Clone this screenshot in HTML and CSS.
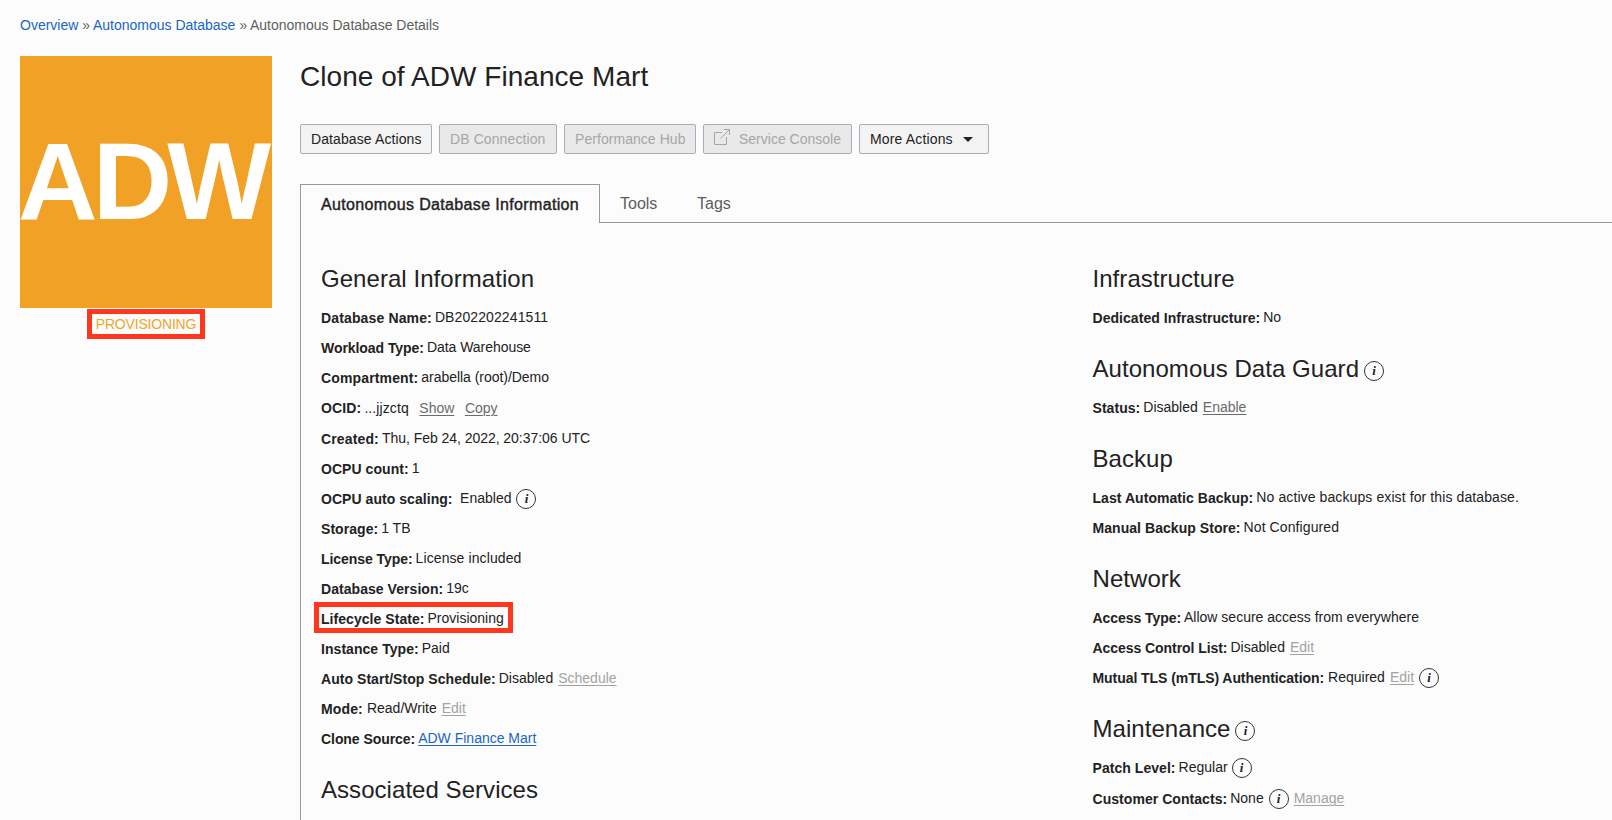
FILE: index.html
```html
<!DOCTYPE html>
<html lang="en">
<head>
<meta charset="utf-8">
<title>Autonomous Database Details</title>
<link rel="stylesheet" href="styles.css">
</head>
<body>
<nav class="breadcrumb">
  <a class="crumb">Overview</a><span class="sep">»</span><a class="crumb">Autonomous Database</a><span class="sep">»</span><span>Autonomous Database Details</span>
</nav>
<div class="page">
  <aside class="side">
    <div class="logo">ADW</div>
    <div class="status">PROVISIONING</div>
  </aside>
  <main class="main">
    <h1 class="title">Clone of ADW Finance Mart</h1>
    <div class="actions">
      <button class="btn b1">Database Actions</button>
      <button class="btn b2 off">DB Connection</button>
      <button class="btn b3 off">Performance Hub</button>
      <button class="btn b4 off"><svg class="ext" width="16" height="16" viewBox="0 0 16 16" fill="none" stroke="currentColor"><path d="M8 3.5H.5v12h12V8M6.5 9.5 15 1M10 .5h5.5V6"/></svg>Service Console</button>
      <button class="btn b5">More Actions<span class="caret"></span></button>
    </div>
    <div class="tabs">
      <div class="tab active">Autonomous Database Information</div>
      <div class="tab tools">Tools</div>
      <div class="tab tags">Tags</div>
    </div>
    <div class="panel">
      <div class="col left">
        <h2 class="head">General Information</h2>
        <div class="row"><b class="s2">Database Name:</b><span class="val wide">DB202202241511</span></div>
        <div class="row"><b class="s0">Workload Type:</b><span class="val tight">Data Warehouse</span></div>
        <div class="row"><b class="s2">Compartment:</b><span class="val tight">arabella (root)/Demo</span></div>
        <div class="row ocid"><b class="s2">OCID:</b><span class="val wide">...jjzctq</span><a class="link">Show</a><a class="link">Copy</a></div>
        <div class="row"><b class="s2">Created:</b><span class="val tight">Thu, Feb 24, 2022, 20:37:06 UTC</span></div>
        <div class="row"><b>OCPU count:</b><span class="val">1</span></div>
        <div class="row scaling"><b>OCPU auto scaling:</b><span class="val">Enabled</span><span class="info">i</span></div>
        <div class="row"><b>Storage:</b><span class="val">1 TB</span></div>
        <div class="row"><b class="s0">License Type:</b><span class="val wide">License included</span></div>
        <div class="row"><b>Database Version:</b><span class="val">19c</span></div>
        <div class="row marked"><b>Lifecycle State:</b><span class="val">Provisioning</span></div>
        <div class="row"><b>Instance Type:</b><span class="val">Paid</span></div>
        <div class="row"><b>Auto Start/Stop Schedule:</b><span class="val">Disabled</span><a class="link dim">Schedule</a></div>
        <div class="row mode"><b class="s2">Mode:</b><span class="val">Read/Write</span><a class="link dim">Edit</a></div>
        <div class="row"><b class="s0">Clone Source:</b><a class="val link blue">ADW Finance Mart</a></div>
        <h2 class="head">Associated Services</h2>
      </div>
      <div class="col">
        <h2 class="head">Infrastructure</h2>
        <div class="row"><b>Dedicated Infrastructure:</b><span class="val">No</span></div>
        <h2 class="head">Autonomous Data Guard<span class="info">i</span></h2>
        <div class="row"><b>Status:</b><span class="val">Disabled</span><a class="link">Enable</a></div>
        <h2 class="head">Backup</h2>
        <div class="row"><b>Last Automatic Backup:</b><span class="val wide">No active backups exist for this database.</span></div>
        <div class="row"><b>Manual Backup Store:</b><span class="val wide">Not Configured</span></div>
        <h2 class="head">Network</h2>
        <div class="row"><b class="s0">Access Type:</b><span class="val">Allow secure access from everywhere</span></div>
        <div class="row"><b class="s0">Access Control List:</b><span class="val">Disabled</span><a class="link dim">Edit</a></div>
        <div class="row mtls"><b class="s0">Mutual TLS (mTLS) Authentication:</b><span class="val">Required</span><a class="link dim">Edit</a><span class="info">i</span></div>
        <h2 class="head">Maintenance<span class="info">i</span></h2>
        <div class="row patch"><b>Patch Level:</b><span class="val">Regular</span><span class="info">i</span></div>
        <div class="row contacts"><b>Customer Contacts:</b><span class="val">None</span><span class="info">i</span><a class="link dim">Manage</a></div>
      </div>
    </div>
  </main>
</div>
</body>
</html>
```
FILE: styles.css
```css
* { box-sizing: border-box; }
body {
  margin: 0;
  height: 820px;
  overflow: hidden;
  background: #fcfcfc;
  color: #222;
  font: 14px/30px "Liberation Sans", Arial, sans-serif;
}
.breadcrumb { display: flex; height: 56px; padding: 10px 0 0 20px; color: #5f5f5f; }
.crumb { color: #1a66c2; }
.sep { margin: 0 2.8px 0 4px; }
.wide { letter-spacing: .1px; }
.tight { letter-spacing: -.04px; }

.page { display: flex; }
.side { width: 300px; flex: none; padding-left: 20px; }
.logo {
  width: 252px;
  height: 252px;
  background: #f1a125;
  color: #fff;
  font-size: 110px;
  font-weight: 700;
  line-height: 249px;
  letter-spacing: -4.8px;
  text-indent: -2px;
  white-space: nowrap;
}
.status {
  width: 118px;
  height: 30px;
  margin: 1px 0 0 67px;
  border: 5px solid #ff371c;
  color: #efa52b;
  line-height: 21px;
  text-align: center;
  letter-spacing: -.18px;
}
.main { flex: 1; min-width: 0; }
.title {
  margin: 0;
  height: 68px;
  font-size: 28px;
  font-weight: 400;
  line-height: 42px;
  letter-spacing: .05px;
}

.actions { display: flex; gap: 7px; }
.btn {
  display: flex;
  align-items: center;
  height: 30px;
  padding: 0 0 0 10px;
  border: 1px solid #a7adb9;
  border-radius: 2px;
  background: #f3f3f3;
  color: #222;
  font: 14px/28px "Liberation Sans", Arial, sans-serif;
  white-space: nowrap;
}
.off { background: #e9e9e9; color: #a6a6a6; }
.b1 { width: 132px; letter-spacing: .1px; }
.b2 { width: 118px; letter-spacing: .1px; }
.b3 { width: 132px; letter-spacing: .05px; }
.b4 { width: 149px; }
.b5 { width: 130px; letter-spacing: .15px; }
.ext { margin: -4px 9px 0 0; }
.caret { margin-left: 10px; border: 5px solid transparent; border-top-color: #222; border-bottom: 0; }

.tabs { display: flex; height: 39px; margin-top: 30px; font-size: 16px; line-height: 40px; }
.tab { border-bottom: 1px solid #999; color: #5c5c5c; }
.active {
  width: 300px;
  padding-left: 20px;
  border: 1px solid #999;
  border-bottom: 0;
  color: #222;
  line-height: 39px;
  letter-spacing: .35px;
  -webkit-text-stroke: .4px #222;
}
.tools { padding-left: 20px; width: 77px; }
.tags { flex: 1; padding-left: 20px; }

.panel { display: flex; height: 597px; padding: 20px 0 0 20px; border-left: 1px solid #999; }
.col { flex: 1; }
.left { flex: none; width: 771.5px; }
.head {
  display: flex;
  height: 60px;
  margin: 0;
  padding-top: 13px;
  font-size: 24px;
  font-weight: 400;
  line-height: 46px;
  letter-spacing: .05px;
}
.row { position: relative; display: flex; height: 30px; white-space: nowrap; }
.row b { margin-right: 3px; letter-spacing: .05px; }
.row .s0 { letter-spacing: -.06px; }
.row .s2 { letter-spacing: .14px; }
.row .val { margin-top: -1px; }
.row .link { margin: -1px 0 0 5px; }
.row .blue { margin-left: 0; }
.link { color: #6b6b6b; text-decoration: underline; text-decoration-thickness: 1px; text-underline-offset: 2px; }
.dim { color: #a3a3a3; }
.blue { color: #1a66c2; }
.row.ocid { margin-bottom: 1px; }
.row.ocid .val { margin-top: 0; }
.row.ocid .link { margin: 0 0 0 10.5px; }
.contacts { margin-top: 1px; }
.row.scaling b { margin-right: 7.5px; }
.row.mode b, .row.mtls b { margin-right: 4px; }
.info {
  flex: none;
  width: 20px;
  height: 20px;
  margin: 5px 0 0 5px;
  border: 1.4px solid #333;
  border-radius: 50%;
  font: italic 700 13px/17px "Liberation Serif", serif;
  text-align: center;
}
.patch .info { margin-left: 4px; }
.head .info { margin: 15px 0 0 5px; }
.marked::after {
  content: "";
  position: absolute;
  left: -7px;
  top: -2px;
  width: 199px;
  height: 31px;
  box-sizing: border-box;
  border: 5px solid #ff371c;
}
```
